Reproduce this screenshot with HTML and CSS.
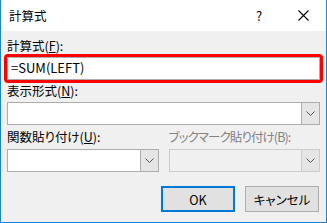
FILE: index.html
```html
<!DOCTYPE html>
<html lang="ja">
<head>
    <meta charset="UTF-8">
    <title>計算式</title>
    <link rel="stylesheet" href="styles.css">
</head>
<body>
    <div class="dialog">
        <!-- Title bar -->
        <div class="title-bar">
            <span class="title">計算式</span>
            <span class="title-help">?</span>
            <span class="title-close">
                <svg width="11" height="11" viewBox="0 0 11 11"><path d="M0.5 0.5 L10.5 10.5 M10.5 0.5 L0.5 10.5" stroke="#000" stroke-width="1.1" fill="none"/></svg>
            </span>
        </div>

        <div class="dialog-body">
            <div class="label">計算式(<u>F</u>):</div>
            <div class="textbox formula">=SUM(LEFT)</div>

            <div class="label">表示形式(<u>N</u>):</div>
            <div class="combo">
                <div class="combo-value"></div>
                <div class="combo-arrow">
                    <svg width="9" height="5" viewBox="0 0 9 5"><path d="M0.5 0.5 L4.5 4.5 L8.5 0.5" stroke="#555" stroke-width="1" fill="none"/></svg>
                </div>
            </div>

            <div class="combo-row">
                <div class="combo-col">
                    <div class="label">関数貼り付け(<u>U</u>):</div>
                    <div class="combo">
                        <div class="combo-value"></div>
                        <div class="combo-arrow">
                            <svg width="9" height="5" viewBox="0 0 9 5"><path d="M0.5 0.5 L4.5 4.5 L8.5 0.5" stroke="#555" stroke-width="1" fill="none"/></svg>
                        </div>
                    </div>
                </div>
                <div class="combo-col">
                    <div class="label disabled">ブックマーク貼り付け(B):</div>
                    <div class="combo off">
                        <div class="combo-value"></div>
                        <div class="combo-arrow">
                            <svg width="9" height="5" viewBox="0 0 9 5"><path d="M0.5 0.5 L4.5 4.5 L8.5 0.5" stroke="#555" stroke-width="1" fill="none"/></svg>
                        </div>
                    </div>
                </div>
            </div>

            <div class="button-row">
                <button class="btn default">OK</button>
                <button class="btn">キャンセル</button>
            </div>
        </div>
    </div>
</body>
</html>
```

FILE: styles.css
```css
body {
    margin: 0;
    font-family: "Noto Sans CJK JP", "Noto Sans", sans-serif;
    font-size: 12.5px;
    font-feature-settings: "palt";
    color: #000;
}
.dialog {
    width: 327px;
    height: 223px;
    box-sizing: border-box;
    border-left: 1px solid #1883d7;
    border-right: 1px solid #1883d7;
    border-bottom: 1px solid #1883d7;
    background: #f0f0f0;
    display: flex;
    flex-direction: column;
}
.title-bar {
    height: 31px;
    background: #fff;
    display: flex;
    align-items: center;
    padding-left: 8px;
}
.title {
    flex: 1;
    font-size: 12.5px;
}
.title-help {
    width: 30px;
    font-size: 13px;
    margin-right: 12px;
}
.title-close {
    width: 28px;
    display: flex;
}
.dialog-body {
    padding: 7px 6px 0 6px;
}
.label {
    height: 16px;
    line-height: 16px;
}
.label.disabled {
    color: #838383;
    letter-spacing: -0.9px;
}
.textbox {
    margin-top: 3px;
    height: 23px;
    box-sizing: border-box;
    border: 1px solid #adadad;
    background: #fff;
    line-height: 20px;
    padding-left: 3px;
}
.formula {
    outline: 3px solid #ff0000;
    border-radius: 1px;
    margin-bottom: 3px;
    font-size: 13px;
}
.combo {
    margin-top: 3px;
    height: 23px;
    box-sizing: border-box;
    border: 1px solid #adadad;
    background: #fff;
    display: flex;
}
.combo-value {
    flex: 1;
}
.combo-arrow {
    width: 17px;
    border-left: 1px solid #adadad;
    background: #e5e5e5;
    display: flex;
    align-items: center;
    justify-content: center;
}
.combo.off {
    background: #f0f0f0;
    border-color: #cccccc;
}
.combo.off .combo-arrow {
    border-left-color: #cccccc;
    background: #e5e5e5;
}
.combo-row {
    display: grid;
    grid-template-columns: 1fr 1fr;
    column-gap: 10px;
    margin-top: 4px;
}
.combo-row .combo {
    margin-top: 4px;
}
.button-row {
    display: flex;
    justify-content: flex-end;
    gap: 10px;
    margin-top: 14px;
    padding-right: 1px;
}
.btn {
    width: 74px;
    height: 26px;
    box-sizing: border-box;
    background: #e1e1e1;
    border: 1px solid #adadad;
    font-family: "Noto Sans CJK JP", "Noto Sans", sans-serif;
    font-size: 12.5px;
    font-feature-settings: "palt";
    color: #000;
    padding: 0;
}
.btn.default {
    border: 2px solid #0078d7;
}
```
